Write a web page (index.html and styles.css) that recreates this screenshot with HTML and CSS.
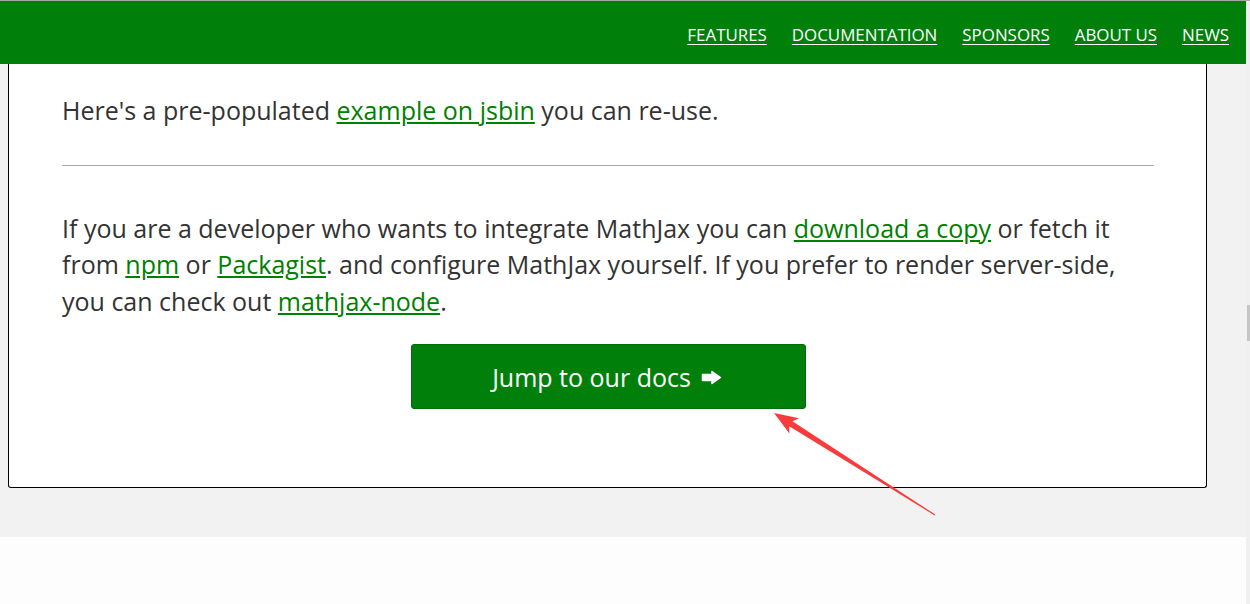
FILE: index.html
```html
<!DOCTYPE html>
<html lang="en">
<head>
<meta charset="utf-8">
<title>MathJax</title>
<link rel="stylesheet" href="styles.css">
</head>
<body>
<div class="page">
  <header class="topbar">
    <nav class="nav">
      <a href="#">Features</a>
      <a href="#">Documentation</a>
      <a href="#">Sponsors</a>
      <a href="#">About Us</a>
      <a href="#">News</a>
    </nav>
  </header>
  <main class="content">
    <section class="card">
      <p class="text">Here's a pre-populated <a href="#">example on jsbin</a> you can re-use.</p>
      <hr class="rule">
      <p class="text">If you are a developer who wants to integrate MathJax you can <a href="#">download a copy</a> or fetch it from <a href="#">npm</a> or <a href="#">Packagist</a>. and configure MathJax yourself. If you prefer to render server-side, you can check out <a href="#">mathjax-node</a>.</p>
      <div class="cta"><a class="btn" href="#">Jump to our docs<svg class="btn-arrow" width="21" height="15" viewBox="0 0 21 15"><path d="M1.5 4.5 H11 V1.5 L19.5 7.5 L11 13.5 V10.5 H1.5 Z" fill="#fff" stroke="#fff" stroke-width="1.5" stroke-linejoin="round"/></svg></a></div>
    </section>
  </main>
  <footer class="foot"></footer>
</div>
<div class="scrollbar"><div class="thumb"></div></div>
<svg class="annot" width="1250" height="604" viewBox="0 0 1250 604">
  <polygon fill="#f83b3b" points="774,413 799,418.3 792.4,421.2 935.3,514.6 934.7,515.4 789.2,426.2 789.4,433.5"/>
</svg>
</body>
</html>
```
FILE: styles.css
```css
* { box-sizing: border-box; }
html, body { margin: 0; padding: 0; }
body {
  width: 1250px;
  height: 604px;
  overflow: hidden;
  display: flex;
  border-top: 1px solid #a6a6a6;
  font-family: "Open Sans", "Noto Sans", sans-serif;
  color: #333;
  position: relative;
}
.page {
  flex: 1;
  display: flex;
  flex-direction: column;
  min-width: 0;
}
.topbar {
  height: 63px;
  background: #00800a;
  display: flex;
  align-items: center;
  justify-content: flex-end;
  padding-right: 17px;
}
.nav {
  display: flex;
  gap: 25px;
  margin-top: 3px;
}
.nav a {
  color: #fff;
  text-transform: uppercase;
  font-size: 16.9px;
  text-decoration: underline;
  text-underline-offset: 3px;
}
.content {
  background: #f2f2f2;
  padding: 0 0 49px 8px;
}
.card {
  width: 1199px;
  background: #fff;
  border: 1px solid #000;
  border-top: none;
  border-radius: 0 0 3px 3px;
  padding: 28px 52px 78px 53px;
}
.text {
  margin: 0;
  font-size: 25px;
  line-height: 36.5px;
}
.text a {
  color: #008000;
  text-decoration: underline;
}
.rule {
  margin: 36px 0 44px;
  border: none;
  border-top: 1px solid #a8a8a8;
  height: 0;
}
.cta {
  margin-top: 25px;
  display: flex;
  justify-content: center;
}
.btn {
  width: 395px;
  height: 65px;
  display: flex;
  align-items: center;
  justify-content: center;
  gap: 10px;
  padding-right: 2px;
  background: #00800a;
  border: 1px solid #006b08;
  border-radius: 3px;
  color: #fff;
  font-size: 25px;
  text-decoration: none;
}
.btn-arrow {
  display: block;
  margin-top: 2px;
}
.foot {
  flex: 1;
  background: #fdfdfd;
}
.scrollbar {
  width: 4px;
  background: #f0f0f0;
  padding-top: 304px;
}
.thumb {
  margin-left: 1px;
  height: 36px;
  background: #c6c6c6;
}
.annot {
  position: absolute;
  left: 0;
  top: -1px;
  pointer-events: none;
}
```
